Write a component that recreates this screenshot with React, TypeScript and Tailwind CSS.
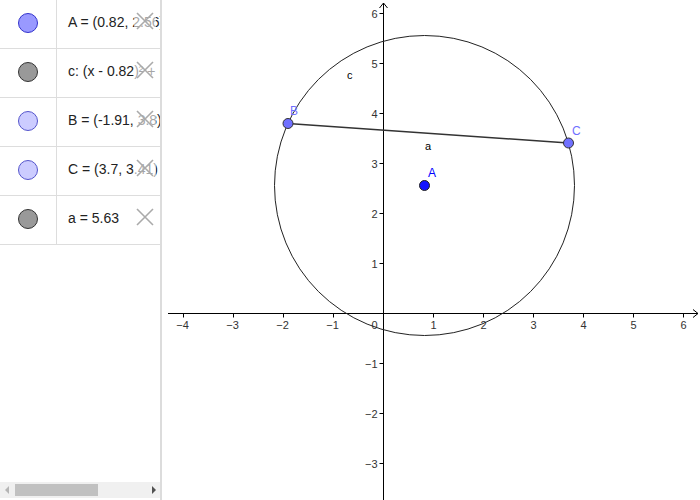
import React from "react";

const rows = [
  { text: "A = (0.82, 2.56)", fill: "#9999ff", stroke: "#3333cc", xy: 19 },
  { text: "c: (x - 0.82)² + (y - 2.56)² = 9", fill: "#999999", stroke: "#333333", xy: 19 },
  { text: "B = (-1.91, 3.8)", fill: "#ccccff", stroke: "#5555cc", xy: 19 },
  { text: "C = (3.7, 3.41)", fill: "#ccccff", stroke: "#5555cc", xy: 19 },
  { text: "a = 5.63", fill: "#999999", stroke: "#333333", xy: 19 },
];

function DelX({ faded }: { faded: boolean }) {
  return (
    <div className={`absolute right-[4px] top-[10px] w-[22px] h-[22px] flex items-center justify-center ${faded ? "bg-white/60" : ""}`}>
      <svg width="18" height="18" viewBox="0 0 18 18">
        <path d="M1 1 L17 17 M17 1 L1 17" stroke="#aaaaaa" strokeWidth="1.6" fill="none" />
      </svg>
    </div>
  );
}

export default function App() {
  const ox = 383.5;
  const oy = 313.5;
  const u = 50;
  const X = (x: number) => ox + x * u;
  const Y = (y: number) => oy - y * u;
  const xt = [-4, -3, -2, -1, 1, 2, 3, 4, 5, 6];
  const yt = [-3, -2, -1, 1, 2, 3, 4, 5, 6];
  const A = { x: X(0.82), y: Y(2.56) };
  const B = { x: X(-1.91), y: Y(3.8) };
  const C = { x: X(3.7), y: Y(3.41) };
  return (
    <div className="w-[700px] h-[500px] flex bg-white overflow-hidden" style={{ fontFamily: '"Liberation Sans", Arial, sans-serif' }}>
      <div className="w-[162px] h-full flex flex-col border-r-2 border-[#dcdcdc] relative">
        <div className="flex-1">
          {rows.map((r, i) => (
            <div key={i} className="h-[49px] flex border-b border-[#dddddd] relative">
              <div className="w-[57px] shrink-0 border-r border-[#dddddd] flex items-center justify-center pb-[3px]">
                <div className="w-[20px] h-[20px] rounded-full border" style={{ background: r.fill, borderColor: r.stroke }} />
              </div>
              <div className="flex-1 overflow-hidden relative">
                <div className="pl-[11px] pt-[13px] text-[14px] text-[#222] whitespace-nowrap leading-[18px]">{r.text}</div>
                <DelX faded={i !== 4} />
              </div>
            </div>
          ))}
        </div>
        <div className="h-[16px] mb-[2px] bg-[#f0f0f0] flex items-center relative">
          <svg width="10" height="10" viewBox="0 0 10 10" className="absolute left-[2px] top-[3px]">
            <path d="M7 1 L3 5 L7 9 Z" fill="#b5b5b5" />
          </svg>
          <div className="absolute left-[15px] top-[2px] w-[83px] h-[12px] bg-[#c1c1c1]" />
          <svg width="10" height="10" viewBox="0 0 10 10" className="absolute left-[149px] top-[3px]">
            <path d="M3 1 L7 5 L3 9 Z" fill="#505050" />
          </svg>
        </div>
      </div>
      <div className="flex-1 h-full relative">
        <svg width="538" height="500" viewBox="0 0 538 500" className="block">
          <g transform="translate(-162,0)" fontFamily='"Liberation Sans", Arial, sans-serif'>
            {/* axes */}
            <line x1="168" y1={oy} x2="698" y2={oy} stroke="#000" strokeWidth="1" />
            <path d={`M693 ${oy - 4} L698 ${oy} L693 ${oy + 4}`} stroke="#000" fill="none" strokeWidth="1" />
            <line x1={ox} y1="3" x2={ox} y2="500" stroke="#000" strokeWidth="1" />
            <path d={`M${ox - 4} 8 L${ox} 3 L${ox + 4} 8`} stroke="#000" fill="none" strokeWidth="1" />
            {xt.map((t) => (
              <g key={"x" + t}>
                <line x1={X(t)} y1={oy} x2={X(t)} y2={oy + 4} stroke="#000" />
                <text x={X(t) + (t < 0 ? -1 : 0)} y={oy + 15} fontSize="11" fill="#333" textAnchor="middle">
                  {t < 0 ? "\u2212" + -t : String(t)}
                </text>
              </g>
            ))}
            {yt.map((t) => (
              <g key={"y" + t}>
                <line x1={ox - 4} y1={Y(t)} x2={ox} y2={Y(t)} stroke="#000" />
                <text x={ox - 6} y={Y(t) + 4} fontSize="11" fill="#333" textAnchor="end">
                  {t < 0 ? "\u2212" + -t : String(t)}
                </text>
              </g>
            ))}
            <text x={ox - 6} y={oy + 15} fontSize="11" fill="#333" textAnchor="end">0</text>
            {/* circle */}
            <circle cx={A.x} cy={A.y} r={150} stroke="#222" strokeWidth="1" fill="none" />
            {/* segment */}
            <line x1={B.x} y1={B.y} x2={C.x} y2={C.y} stroke="#333" strokeWidth="1.6" />
            {/* labels */}
            <text x="347" y="79" fontSize="11" fill="#000">c</text>
            <text x="425" y="150" fontSize="11" fill="#000">a</text>
            <text x="428" y="177" fontSize="12" fill="#0000ff">A</text>
            <text x="290" y="115" fontSize="12" fill="#6f6fff">B</text>
            <text x="572" y="135" fontSize="12" fill="#6f6fff">C</text>
            {/* points */}
            <circle cx={A.x} cy={A.y} r="5" fill="#1515ff" stroke="#222" strokeWidth="1" />
            <circle cx={B.x} cy={B.y} r="5" fill="#7070ff" stroke="#333" strokeWidth="1" />
            <circle cx={C.x} cy={C.y} r="5" fill="#7070ff" stroke="#333" strokeWidth="1" />
          </g>
        </svg>
      </div>
    </div>
  );
}
